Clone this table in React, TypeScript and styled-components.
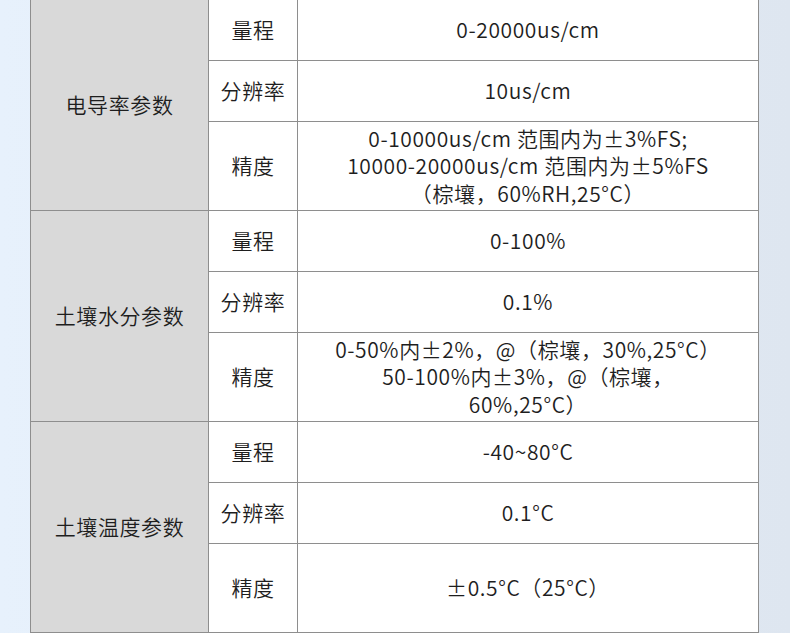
import React from "react";
import styled, { createGlobalStyle } from "styled-components";

const Global = createGlobalStyle`
  html, body { margin: 0; padding: 0; }
  body {
    background: linear-gradient(to right, #e7f1fc, #dee6f0);
    font-family: "Noto Sans CJK SC", "Noto Sans", sans-serif;
    color: #1e1e1e;
    overflow: hidden;
  }
`;

const Page = styled.div`
  width: 790px;
  height: 633px;
  display: flex;
  padding-left: 30px;
  box-sizing: border-box;
  overflow: hidden;
`;

const Grid = styled.div`
  margin-top: -1px;
  display: grid;
  grid-template-columns: 177px 88px 460px;
  grid-template-rows: repeat(3, 60px 60px 88px);
  gap: 1px;
  padding: 1px;
  background: #8e8e8e;
  align-self: flex-start;
`;

const Cell = styled.div<{ $category?: boolean }>`
  display: flex;
  align-items: center;
  justify-content: center;
  text-align: center;
  font-size: 21px;
  font-weight: 350;
  letter-spacing: 0.6px;
  line-height: 27.5px;
  background: ${(p) => (p.$category ? "#d9d9d9" : "#ffffff")};
  ${(p) => (p.$category ? "grid-row: span 3;" : "")}
`;

type Group = { name: string; rows: [string, React.ReactNode][] };

const groups: Group[] = [
  {
    name: "电导率参数",
    rows: [
      ["量程", "0-20000us/cm"],
      ["分辨率", "10us/cm"],
      [
        "精度",
        <>
          0-10000us/cm 范围内为±3%FS;
          <br />
          10000-20000us/cm 范围内为±5%FS
          <br />
          （棕壤，60%RH,25°C）
        </>,
      ],
    ],
  },
  {
    name: "土壤水分参数",
    rows: [
      ["量程", "0-100%"],
      ["分辨率", "0.1%"],
      [
        "精度",
        <>
          0-50%内±2%，@（棕壤，30%,25°C）
          <br />
          50-100%内±3%，@（棕壤，
          <br />
          60%,25°C）
        </>,
      ],
    ],
  },
  {
    name: "土壤温度参数",
    rows: [
      ["量程", "-40~80°C"],
      ["分辨率", "0.1°C"],
      ["精度", "±0.5°C（25°C）"],
    ],
  },
];

export default function App() {
  return (
    <>
      <Global />
      <Page>
        <Grid>
          {groups.map((g) => (
            <React.Fragment key={g.name}>
              <Cell $category>{g.name}</Cell>
              {g.rows.map(([label, value], i) => (
                <React.Fragment key={i}>
                  <Cell>{label}</Cell>
                  <Cell>{value}</Cell>
                </React.Fragment>
              ))}
            </React.Fragment>
          ))}
        </Grid>
      </Page>
    </>
  );
}
